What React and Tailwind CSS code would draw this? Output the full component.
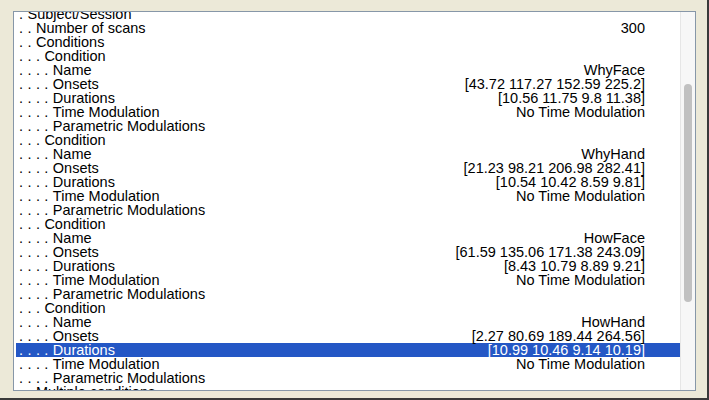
import React from 'react';

const NO_TM = 'No Time Modulation';

// depth, label, value
const rows = [
  [1, 'Subject/Session'],
  [2, 'Number of scans', '300'],
  [2, 'Conditions'],
  [3, 'Condition'],
  [4, 'Name', 'WhyFace'],
  [4, 'Onsets', '[43.72 117.27 152.59 225.2]'],
  [4, 'Durations', '[10.56 11.75 9.8 11.38]'],
  [4, 'Time Modulation', NO_TM],
  [4, 'Parametric Modulations'],
  [3, 'Condition'],
  [4, 'Name', 'WhyHand'],
  [4, 'Onsets', '[21.23 98.21 206.98 282.41]'],
  [4, 'Durations', '[10.54 10.42 8.59 9.81]'],
  [4, 'Time Modulation', NO_TM],
  [4, 'Parametric Modulations'],
  [3, 'Condition'],
  [4, 'Name', 'HowFace'],
  [4, 'Onsets', '[61.59 135.06 171.38 243.09]'],
  [4, 'Durations', '[8.43 10.79 8.89 9.21]'],
  [4, 'Time Modulation', NO_TM],
  [4, 'Parametric Modulations'],
  [3, 'Condition'],
  [4, 'Name', 'HowHand'],
  [4, 'Onsets', '[2.27 80.69 189.44 264.56]'],
  [4, 'Durations', '[10.99 10.46 9.14 10.19]'],
  [4, 'Time Modulation', NO_TM],
  [4, 'Parametric Modulations'],
  [2, 'Multiple conditions'],
];

const SELECTED = 24;

function Row({ depth, label, value, selected }) {
  return (
    <div
      className={
        'flex h-[14px] items-center justify-between whitespace-pre pl-[3px] pr-[35px] leading-[14px] ' +
        (selected ? 'bg-[#2457c5] text-white' : 'text-black')
      }
    >
      <span>
        <span className="tracking-[0.2px]">{'. '.repeat(depth)}</span>
        {label}
      </span>
      {value && <span>{value}</span>}
    </div>
  );
}

export default function App() {
  return (
    <div
      className="flex h-[400px] w-[709px] flex-col border-r-2 border-b-2 border-r-[#3a3a3a] border-b-[#3a3a3a] bg-[#ece9d8] pt-[11px] pr-[11px] pb-[7px] pl-[13px] antialiased"
      style={{ fontFamily: '"Liberation Sans", Arial, sans-serif' }}
    >
      <div className="flex min-h-0 flex-1 border border-[#8797a8] bg-white text-[14.5px]">
        <div className="min-w-0 flex-1 overflow-hidden pl-[2px]">
          <div className="-mt-[5px]">
            {rows.map(([d, l, v], i) => (
              <Row key={i} depth={d} label={l} value={v} selected={i === SELECTED} />
            ))}
          </div>
        </div>
        {/* scrollbar */}
        <div className="flex w-[15px] flex-col border-l border-[#e6e6e6] bg-[#f7f7f7] pt-[72px] pb-[88px]">
          <div className="mx-auto h-[218px] w-[8px] rounded-full bg-[#c1c1c1]" />
        </div>
      </div>
    </div>
  );
}
